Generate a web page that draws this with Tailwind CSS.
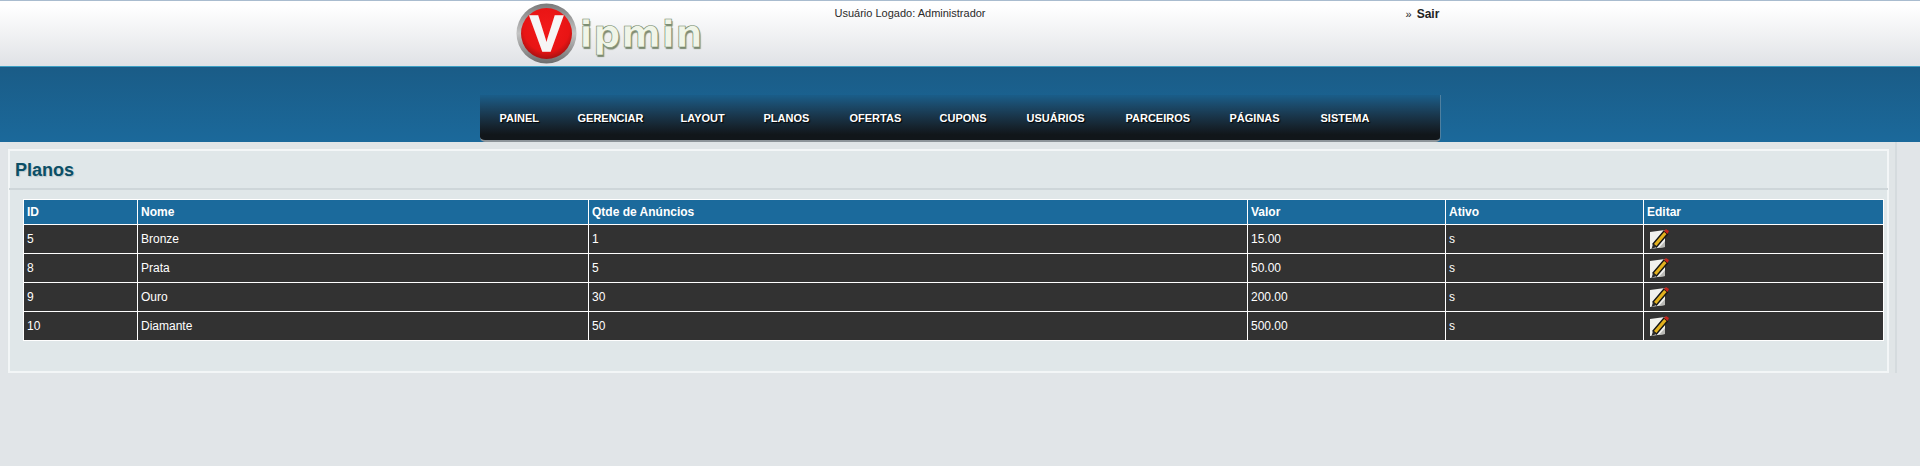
<!DOCTYPE html>
<html lang="pt-BR">

<head>
    <meta charset="utf8" />
    <script src="https://cdn.jsdelivr.net/npm/@tailwindcss/browser@4"></script>
    <title>Vipmin - Planos</title>
</head>

<body class="bg-[#e1e5e8] font-['Liberation_Sans',Arial,sans-serif] text-[12px] h-[466px] overflow-hidden">
    <!-- Header -->
    <header class="h-[67px] border-t border-t-[#a9bccf] border-b border-b-[#3d9fc4] bg-gradient-to-b from-white from-[8%] to-[#e0e2e6]">
        <div class="w-[961px] mx-auto flex items-start">
            <div class="relative w-[190px] h-[62px] ml-[36px] mt-[2px] shrink-0">
                <svg class="absolute left-0 top-0" width="62" height="62" viewBox="0 0 62 62">
                    <defs>
                        <radialGradient id="ball" cx="50%" cy="40%" r="60%">
                            <stop offset="0" stop-color="#f21a1a" />
                            <stop offset="0.75" stop-color="#e81414" />
                            <stop offset="1" stop-color="#a81212" />
                        </radialGradient>
                        <linearGradient id="ring" x1="0" y1="0" x2="0" y2="1">
                            <stop offset="0" stop-color="#7a7a7a" />
                            <stop offset="0.5" stop-color="#c4c4c4" />
                            <stop offset="1" stop-color="#6c6c6c" />
                        </linearGradient>
                    </defs>
                    <circle cx="30.5" cy="30.5" r="30" fill="url(#ring)" />
                    <circle cx="30.5" cy="30.5" r="25.5" fill="url(#ball)" />
                    <text x="30.5" y="48" text-anchor="middle" font-family="Liberation Sans" font-weight="700" font-size="50" fill="#f6f6f6" stroke="#f6f6f6" stroke-width="1.5">V</text>
                </svg>
                <span class="absolute left-[64px] top-[8px] text-[38px] leading-[46px] tracking-[0.8px] font-bold text-[#f0f5e8] font-['DejaVu_Sans',sans-serif] [-webkit-text-stroke:0.6px_#74896a] [text-shadow:1px_2px_1px_#7d8a72]">ipmin</span>
            </div>
            <div class="ml-[129px] mt-[5px] w-[571px] text-[11px] leading-[14px] text-[#2a2a2a]">Usuário Logado: Administrador</div>
            <div class="mt-[5px] flex items-center gap-[5px] text-[#222]">
                <span class="text-[11px] leading-[16px]">»</span>
                <span class="font-bold text-[12px] leading-[16px]">Sair</span>
            </div>
        </div>
    </header>

    <!-- Menu -->
    <div class="h-[75px] bg-gradient-to-b from-[#1a5c87] to-[#1b699b] flex justify-center items-start">
        <nav class="mt-[28px] w-[961px] h-[47px] rounded-b-[5px] border-b-2 border-r border-b-[#8d9499] border-r-[#4f7f9f] bg-gradient-to-b from-[#1a5c87] from-[2%] to-[#11161a] to-[88%] flex items-center pl-[20px] pt-[1px] text-[11px] font-bold text-white [text-shadow:1px_1px_1px_#000]">
            <a class="w-[78px]">PAINEL</a>
            <a class="w-[103px]">GERENCIAR</a>
            <a class="w-[83px]">LAYOUT</a>
            <a class="w-[86px]">PLANOS</a>
            <a class="w-[90px]">OFERTAS</a>
            <a class="w-[87px]">CUPONS</a>
            <a class="w-[99px]">USUÁRIOS</a>
            <a class="w-[104px]">PARCEIROS</a>
            <a class="w-[91px]">PÁGINAS</a>
            <a>SISTEMA</a>
        </nav>
    </div>

    <!-- Content -->
    <main class="ml-[7px] mr-[23px] h-[231px] pt-[7px] border-r-2 border-r-[#d5dbde] bg-[#e0e5e7]">
        <section class="mr-[6px] ml-[1px] h-[224px] border-2 border-[#f3f6f7] bg-[#e0e7e9]">
            <h1 class="mx-[-1px] h-[39px] pl-[6px] pt-[8px] border-b-2 border-b-[#ced6d9] text-[18px] leading-[22px] font-bold text-[#0b4f66] [text-shadow:1px_1px_1px_#b9c6cb]">Planos</h1>
            <div class="px-[13px] pt-[9px]">
                <table class="w-[1860px] table-fixed border-collapse text-[12px] text-white">
                    <colgroup>
                        <col class="w-[114px]">
                        <col class="w-[451px]">
                        <col class="w-[659px]">
                        <col class="w-[198px]">
                        <col class="w-[198px]">
                        <col class="w-[240px]">
                    </colgroup>
                    <thead>
                        <tr class="h-[25px] bg-[#1b6a9c] font-bold text-left">
                            <th class="border border-white pl-[3px]">ID</th>
                            <th class="border border-white pl-[3px]">Nome</th>
                            <th class="border border-white pl-[3px]">Qtde de Anúncios</th>
                            <th class="border border-white pl-[3px]">Valor</th>
                            <th class="border border-white pl-[3px]">Ativo</th>
                            <th class="border border-white pl-[3px]">Editar</th>
                        </tr>
                    </thead>
                    <tbody>
                        <tr class="h-[29px] bg-[#323232]">
                            <td class="border border-white pl-[3px]">5</td>
                            <td class="border border-white pl-[3px]">Bronze</td>
                            <td class="border border-white pl-[3px]">1</td>
                            <td class="border border-white pl-[3px]">15.00</td>
                            <td class="border border-white pl-[3px]">s</td>
                            <td class="border border-white pl-[5px]"><svg class="block" width="20" height="22" viewBox="0 0 20 22"><use href="#edit" /></svg></td>
                        </tr>
                        <tr class="h-[29px] bg-[#323232]">
                            <td class="border border-white pl-[3px]">8</td>
                            <td class="border border-white pl-[3px]">Prata</td>
                            <td class="border border-white pl-[3px]">5</td>
                            <td class="border border-white pl-[3px]">50.00</td>
                            <td class="border border-white pl-[3px]">s</td>
                            <td class="border border-white pl-[5px]"><svg class="block" width="20" height="22" viewBox="0 0 20 22"><use href="#edit" /></svg></td>
                        </tr>
                        <tr class="h-[29px] bg-[#323232]">
                            <td class="border border-white pl-[3px]">9</td>
                            <td class="border border-white pl-[3px]">Ouro</td>
                            <td class="border border-white pl-[3px]">30</td>
                            <td class="border border-white pl-[3px]">200.00</td>
                            <td class="border border-white pl-[3px]">s</td>
                            <td class="border border-white pl-[5px]"><svg class="block" width="20" height="22" viewBox="0 0 20 22"><use href="#edit" /></svg></td>
                        </tr>
                        <tr class="h-[29px] bg-[#323232]">
                            <td class="border border-white pl-[3px]">10</td>
                            <td class="border border-white pl-[3px]">Diamante</td>
                            <td class="border border-white pl-[3px]">50</td>
                            <td class="border border-white pl-[3px]">500.00</td>
                            <td class="border border-white pl-[3px]">s</td>
                            <td class="border border-white pl-[5px]"><svg class="block" width="20" height="22" viewBox="0 0 20 22"><use href="#edit" /></svg></td>
                        </tr>
                    </tbody>
                </table>
            </div>
        </section>
    </main>

    <!-- Edit icon -->
    <svg class="hidden" width="0" height="0">
        <symbol id="edit" viewBox="0 0 20 22">
            <path d="M1 4 L16 2 L16 19 L1 21 Z" fill="#f1f1ee" />
            <path d="M16 13 L16 19 L10 20 Z" fill="#b9b9b5" />
            <path d="M4 16 L15 3 L18.5 6 L7.5 19 Z" fill="#e2b01e" stroke="#151515" stroke-width="1.4" />
            <path d="M15 3 L17 1 L20 3 L18.5 6 Z" fill="#c4241c" />
            <path d="M4 16 L7.5 19 L2.5 21 Z" fill="#2c2c2c" />
        </symbol>
    </svg>
</body>

</html>
